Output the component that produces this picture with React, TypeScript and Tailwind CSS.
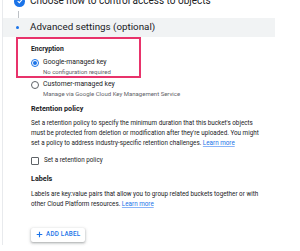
import React from 'react';

const Radio: React.FC<{ checked?: boolean }> = ({ checked }) => (
  <span
    className={`flex h-[8px] w-[8px] shrink-0 items-center justify-center rounded-full border ${
      checked ? 'border-[#1a73e8]' : 'border-[#5f6368]'
    }`}
  >
    {checked && <span className="h-[4px] w-[4px] rounded-full bg-[#1a73e8]" />}
  </span>
);

const LearnMore: React.FC = () => (
  <span className="text-[#1a73e8] underline decoration-[#8ab4f8] underline-offset-[1px]">Learn more</span>
);

const App: React.FC = () => {
  return (
    <div className="h-[251px] w-[300px] overflow-hidden bg-white font-['Roboto',sans-serif] text-[#202124]">
      <div className="ml-[2px] h-full border-l border-[#e8eaed]">
        {/* Step 1 (cut at top) */}
        <div className="-mt-[6px] flex h-[14px] items-center">
          <div className="ml-[11px] flex h-[11px] w-[11px] items-center justify-center rounded-full bg-[#1a73e8]">
            <svg viewBox="0 0 12 12" className="h-[8px] w-[8px]">
              <path d="M2.5 6.2 L5 8.5 L9.5 3.5" fill="none" stroke="white" strokeWidth="1.6" />
            </svg>
          </div>
          <span className="ml-[5px] text-[10px] leading-none">Choose how to control access to objects</span>
        </div>
        <div className="ml-[15px] mt-[3px] h-[7px] w-px bg-[#bdc1c6]" />

        {/* Step 2 header */}
        <div className="flex h-[19px] w-[272px] items-center bg-[#f1f3f4]">
          <span className="ml-[13px] h-[3px] w-[3px] rounded-full bg-[#1a73e8]" />
          <span className="ml-[11px] text-[9.8px]">Advanced settings (optional)</span>
        </div>

        {/* Encryption */}
        <div className="ml-[13px] h-[41px] w-[125px] border-2 border-[#e8336b] pl-[13px]">
          <div className="mt-[7px] text-[6.8px] font-bold leading-none">Encryption</div>
          <div className="mt-[6px] flex items-start gap-[4px]">
            <Radio checked />
            <div className="leading-none">
              <div className="text-[6.8px]">Google-managed key</div>
              <div className="mt-[3px] text-[6px] text-[#5f6368]">No configuration required</div>
            </div>
          </div>
        </div>
        <div className="ml-[28px] mt-[3px] flex items-start gap-[4px]">
          <Radio />
          <div className="leading-none">
            <div className="text-[6.8px]">Customer-managed key</div>
            <div className="mt-[3px] text-[6px] text-[#5f6368]">Manage via Google Cloud Key Management Service</div>
          </div>
        </div>

        {/* Retention */}
        <div className="ml-[28px]">
          <div className="mt-[8px] text-[7.2px] font-bold leading-none">Retention policy</div>
          <div className="mt-[6px] whitespace-nowrap text-[6.3px] leading-[10px]">
            <div>Set a retention policy to specify the minimum duration that this bucket's objects</div>
            <div>must be protected from deletion or modification after they're uploaded. You might</div>
            <div>
              set a policy to address industry-specific retention challenges. <LearnMore />
            </div>
          </div>
          <div className="mt-[8px] flex items-center gap-[5px]">
            <span className="h-[8px] w-[8px] rounded-[1px] border border-[#5f6368]" />
            <span className="text-[6.3px]">Set a retention policy</span>
          </div>

          {/* Labels */}
          <div className="mt-[10px] text-[7.2px] font-bold leading-none">Labels</div>
          <div className="mt-[6px] whitespace-nowrap text-[6.3px] leading-[10px]">
            <div>Labels are key:value pairs that allow you to group related buckets together or with</div>
            <div>
              other Cloud Platform resources. <LearnMore />
            </div>
          </div>
          <button className="mt-[19px] flex h-[14px] items-center gap-[3px] rounded-[2px] bg-white px-[5px] shadow-[0_1px_2px_rgba(60,64,67,0.3),0_1px_3px_1px_rgba(60,64,67,0.15)]">
            <svg viewBox="0 0 10 10" className="h-[7px] w-[7px]">
              <path d="M5 1 V9 M1 5 H9" stroke="#1a73e8" strokeWidth="1.6" />
            </svg>
            <span className="text-[6.3px] font-medium tracking-[0.2px] text-[#1a73e8]">ADD LABEL</span>
          </button>
        </div>
      </div>
    </div>
  );
};

export default App;
